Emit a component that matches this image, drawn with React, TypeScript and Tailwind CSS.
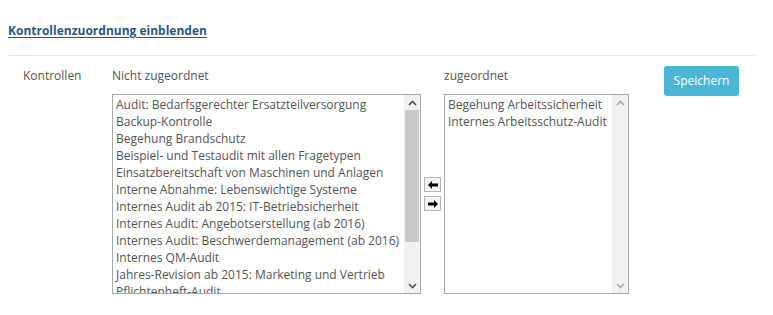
import React from 'react';

const font = { fontFamily: '"Open Sans", "Noto Sans", sans-serif' };

const unassigned = [
  'Audit: Bedarfsgerechter Ersatzteilversorgung',
  'Backup-Kontrolle',
  'Begehung Brandschutz',
  'Beispiel- und Testaudit mit allen Fragetypen',
  'Einsatzbereitschaft von Maschinen und Anlagen',
  'Interne Abnahme: Lebenswichtige Systeme',
  'Internes Audit ab 2015: IT-Betriebsicherheit',
  'Internes Audit: Angebotserstellung (ab 2016)',
  'Internes Audit: Beschwerdemanagement (ab 2016)',
  'Internes QM-Audit',
  'Jahres-Revision ab 2015: Marketing und Vertrieb',
  'Pflichtenheft-Audit',
];

const assigned = ['Begehung Arbeitssicherheit', 'Internes Arbeitsschutz-Audit'];

const Chevron = ({ up, color }: { up?: boolean; color: string }) => (
  <svg width="9" height="6" viewBox="0 0 9 6">
    <path
      d={up ? 'M1 5 L4.5 1.5 L8 5' : 'M1 1 L4.5 4.5 L8 1'}
      stroke={color}
      strokeWidth="1.6"
      fill="none"
    />
  </svg>
);

function ListBox({ items, width, scroll }: { items: string[]; width: string; scroll: boolean }) {
  const arrow = scroll ? '#505050' : '#a8a8a8';
  return (
    <div className={`relative h-[200px] ${width} border border-[#a9a9a9] bg-white overflow-hidden`}>
      <ul className="pl-[3px] pt-px pr-5 text-[12px] leading-[17px] text-[#555]">
        {items.map((t) => (
          <li key={t} className="whitespace-nowrap">{t}</li>
        ))}
      </ul>
      <div className="absolute right-0 top-0 bottom-0 w-4 bg-[#f1f1f1] flex flex-col">
        <div className="h-[15px] flex items-center justify-center">
          <Chevron up color={arrow} />
        </div>
        <div className="flex-1 px-px">
          {scroll && <div className="h-[132px] bg-[#c9c9c9]" />}
        </div>
        <div className="h-[15px] flex items-center justify-center">
          <Chevron color={arrow} />
        </div>
      </div>
    </div>
  );
}

const MoveButton = ({ dir }: { dir: 'left' | 'right' }) => (
  <button className="w-[17px] h-[15px] border border-[#b5b5b5] bg-[#f4f4f4] flex items-center justify-center">
    <svg width="10" height="8" viewBox="0 0 10 8">
      {dir === 'left' ? (
        <path d="M0 4 L4 0 L4 2.5 L10 2.5 L10 5.5 L4 5.5 L4 8 Z" fill="#000" />
      ) : (
        <path d="M10 4 L6 0 L6 2.5 L0 2.5 L0 5.5 L6 5.5 L6 8 Z" fill="#000" />
      )}
    </svg>
  </button>
);

export default function App() {
  return (
    <div className="w-[773px] h-[315px] bg-white px-2 pt-[22px]" style={font}>
      <a className="block text-[12px] leading-[17px] font-bold text-[#2b5783] underline underline-offset-2">
        Kontrollenzuordnung einblenden
      </a>
      <div className="mt-[16px] w-[747px] h-px bg-[#e5e5e5]" />

      <div className="mt-[10px] flex items-start">
        <div className="w-[104px] pl-[15px] pt-px text-[12px] leading-[17px] text-[#555]">Kontrollen</div>

        <div className="flex flex-col">
          <div className="pt-px text-[12px] leading-[17px] text-[#555] mb-[10px]">Nicht zugeordnet</div>
          <ListBox items={unassigned} width="w-[309px]" scroll />
        </div>

        <div className="self-stretch flex flex-col justify-center gap-1 pt-[28px] px-[3px]">
          <MoveButton dir="left" />
          <MoveButton dir="right" />
        </div>

        <div className="flex flex-col">
          <div className="pt-px text-[12px] leading-[17px] text-[#555] mb-[10px]">zugeordnet</div>
          <ListBox items={assigned} width="w-[185px]" scroll={false} />
        </div>

        <button className="ml-[35px] w-[75px] h-[30px] rounded-[3px] bg-[#4bb6d6] text-white text-[12px]">
          Speichern
        </button>
      </div>
    </div>
  );
}
